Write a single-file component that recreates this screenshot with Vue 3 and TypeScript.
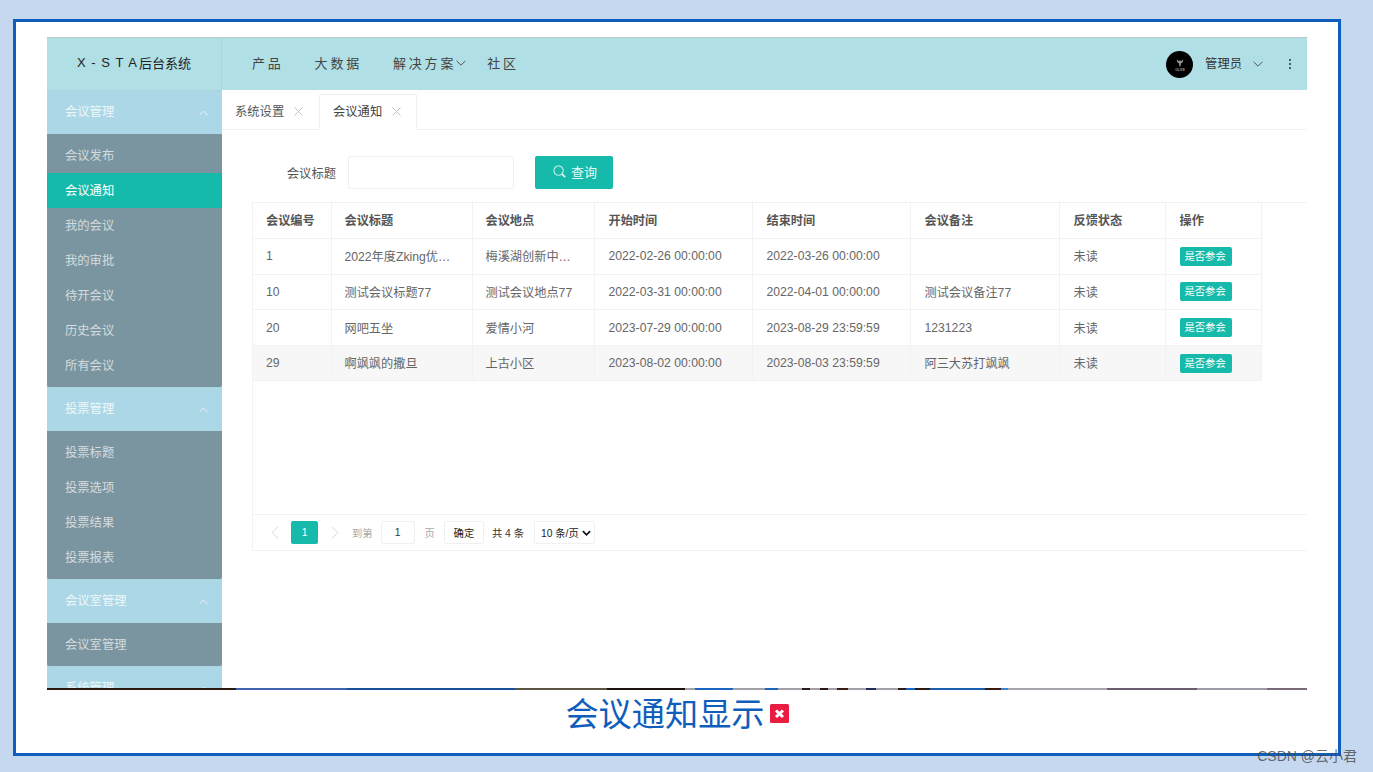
<script setup lang="ts">
interface Group { title: string; items: string[]; open: boolean }
interface Row { id: string; title: string; place: string; start: string; end: string; note: string; state: string }

const groups: Group[] = [
  { title: '会议管理', open: true, items: ['会议发布', '会议通知', '我的会议', '我的审批', '待开会议', '历史会议', '所有会议'] },
  { title: '投票管理', open: true, items: ['投票标题', '投票选项', '投票结果', '投票报表'] },
  { title: '会议室管理', open: true, items: ['会议室管理'] },
  { title: '系统管理', open: false, items: [] }
]
const heads: string[] = ['会议编号', '会议标题', '会议地点', '开始时间', '结束时间', '会议备注', '反馈状态', '操作']
const rows: Row[] = [
  { id: '1', title: '2022年度Zking优…', place: '梅溪湖创新中…', start: '2022-02-26 00:00:00', end: '2022-03-26 00:00:00', note: '', state: '未读' },
  { id: '10', title: '测试会议标题77', place: '测试会议地点77', start: '2022-03-31 00:00:00', end: '2022-04-01 00:00:00', note: '测试会议备注77', state: '未读' },
  { id: '20', title: '网吧五坐', place: '爱情小河', start: '2023-07-29 00:00:00', end: '2023-08-29 23:59:59', note: '1231223', state: '未读' },
  { id: '29', title: '啊飒飒的撒旦', place: '上古小区', start: '2023-08-02 00:00:00', end: '2023-08-03 23:59:59', note: '阿三大苏打飒飒', state: '未读' }
]
const colWidths: number[] = [78, 141, 122, 158, 158, 149, 106, 96]
</script>

<template>
  <div class="page-wrap">
    <div class="frame">
      <div class="app">
        <header class="top">
          <div class="logo"><span class="logo-latin">X-STA</span>后台系统</div>
          <nav class="nav">
            <span class="nav-item">产品</span>
            <span class="nav-item">大数据</span>
            <span class="nav-item nav-caret">解决方案
              <svg class="caret" viewBox="0 0 10 6" width="10" height="6"><path d="M.6.8 5 5.2 9.4.8" fill="none" stroke="#555" stroke-width="1" /></svg>
            </span>
            <span class="nav-item">社区</span>
          </nav>
          <div class="user">
            <span class="avatar">
              <svg viewBox="0 0 26 26" width="26" height="26">
                <path d="M9.5 8.5 12 10 13 9.2 14 10 16.5 8.5 15.6 11.4 14.1 12.2 13.5 15.5H12.5L11.9 12.2 10.4 11.4Z" fill="#8f8f8f" />
                <text x="13" y="19.6" text-anchor="middle" class="avatar-text">OLIVE</text>
              </svg>
            </span>
            <span class="user-name">管理员</span>
            <svg class="user-caret" viewBox="0 0 10 6" width="10" height="6"><path d="M.6.8 5 5.2 9.4.8" fill="none" stroke="#555" stroke-width="1" /></svg>
            <span class="dots"><i></i><i></i><i></i></span>
          </div>
        </header>

        <div class="body">
          <aside class="side">
            <section v-for="g in groups" :key="g.title">
              <div class="group-head">
                <span>{{ g.title }}</span>
                <svg class="group-arrow" viewBox="0 0 10 6" width="9" height="6"><path d="M.6 5.2 5 .8 9.4 5.2" fill="none" stroke="#eef7fa" stroke-width="1" /></svg>
              </div>
              <ul v-if="g.items.length" class="group-list">
                <li v-for="it in g.items" :key="it" :class="{ active: it === '会议通知' }">{{ it }}</li>
              </ul>
            </section>
          </aside>

          <main class="main">
            <div class="tabs">
              <div class="tab">系统设置
                <svg class="x" viewBox="0 0 9 9" width="9" height="9"><path d="M.5.5l8 8M8.5.5l-8 8" stroke="#c4c4c4" stroke-width="1" fill="none" /></svg>
              </div>
              <div class="tab current">会议通知
                <svg class="x" viewBox="0 0 9 9" width="9" height="9"><path d="M.5.5l8 8M8.5.5l-8 8" stroke="#c4c4c4" stroke-width="1" fill="none" /></svg>
              </div>
            </div>

            <div class="content">
              <form class="search" @submit.prevent>
                <label class="search-label">会议标题</label>
                <input class="search-input" type="text" />
                <button class="search-btn" type="button">
                  <svg viewBox="0 0 16 16" width="15" height="15"><circle cx="7" cy="7" r="5" fill="none" stroke="#bdeee8" stroke-width="1.2" /><path d="M10.8 10.8 14 14" stroke="#e6f8f6" stroke-width="1.8" /></svg>
                  <span>查询</span>
                </button>
              </form>

              <div class="table-box">
                <div class="table-area">
                  <table class="table">
                    <colgroup><col v-for="(w, i) in colWidths" :key="i" :style="{ width: w + 'px' }" /></colgroup>
                    <thead>
                      <tr><th v-for="h in heads" :key="h">{{ h }}</th></tr>
                    </thead>
                    <tbody>
                      <tr v-for="(r, i) in rows" :key="r.id" :class="{ hover: i === 3 }">
                        <td>{{ r.id }}</td>
                        <td>{{ r.title }}</td>
                        <td>{{ r.place }}</td>
                        <td>{{ r.start }}</td>
                        <td>{{ r.end }}</td>
                        <td>{{ r.note }}</td>
                        <td>{{ r.state }}</td>
                        <td><span class="tag">是否参会</span></td>
                      </tr>
                    </tbody>
                  </table>
                </div>
                <div class="pager">
                  <svg class="pg-arrow" viewBox="0 0 8 14" width="8" height="13"><path d="M7 1 1 7l6 6" fill="none" stroke="#d2d2d2" stroke-width="1" /></svg>
                  <span class="pg-cur">1</span>
                  <svg class="pg-arrow next" viewBox="0 0 8 14" width="8" height="13"><path d="m1 1 6 6-6 6" fill="none" stroke="#d2d2d2" stroke-width="1" /></svg>
                  <span class="pg-light to">到第</span>
                  <span class="pg-input">1</span>
                  <span class="pg-light page">页</span>
                  <span class="pg-ok">确定</span>
                  <span class="pg-total">共 4 条</span>
                  <span class="pg-size">10 条/页
                    <svg viewBox="0 0 10 6" width="9" height="6"><path d="M1 1l4 4 4-4" fill="none" stroke="#111" stroke-width="1.9" /></svg>
                  </span>
                </div>
              </div>
            </div>
          </main>
        </div>
        <div class="strip"></div>
      </div>

      <div class="caption">
        <span>会议通知显示</span>
        <svg class="err" viewBox="0 0 19 19" width="19" height="19">
          <rect width="19" height="19" rx="1.5" fill="#ea1c41" />
          <path d="M6 6.5l7 6.5M13 6.5l-7 6.5" stroke="#fff" stroke-width="3" />
        </svg>
      </div>
    </div>
    <div class="mark">CSDN @云小君</div>
  </div>
</template>

<style>
html, body { margin: 0; background: #c6d8f0; }
</style>

<style scoped>
* { box-sizing: border-box; }
.page-wrap {
  position: relative;
  height: 772px;
  padding: 19px 0 0 13px;
  overflow: hidden;
  font-family: "Liberation Sans", "Noto Sans CJK SC", sans-serif;
  font-size: 12.3px;
  color: #666;
}
.frame {
  width: 1328px;
  height: 737px;
  padding: 15px 31px 0;
  border: 3px solid #0f5ebb;
  background: #fff;
}
.app { width: 1260px; height: 653px; display: flex; flex-direction: column; overflow: hidden; }
.top { height: 53px; flex: none; display: flex; align-items: center; background: #b0dfe5; border-top: 1px solid #bcc8c8; color: #333; }
.logo { width: 175px; height: 100%; padding-bottom: 3px; display: flex; align-items: center; justify-content: center; font-size: 13px; color: #222; background: #b0dfe5; border-right: 1px solid #a8d6db; box-shadow: 0 1px 0 #a3d0d8; }
.logo-latin { letter-spacing: 5.6px; margin-right: -3.5px; }
.nav { display: flex; align-items: center; padding: 0 0 3px 30px; gap: 31px; }
.nav-item { font-size: 13px; letter-spacing: 2.8px; color: #444; white-space: nowrap; display: flex; align-items: center; }
.nav-caret { margin-right: -10px; }
.user { margin-left: auto; display: flex; align-items: center; padding-right: 16px; }
.avatar { width: 27px; height: 27px; border-radius: 50%; background: #000; display: flex; align-items: center; justify-content: center; }
.avatar-text { font-size: 3.2px; fill: #a0a0a0; font-family: "Liberation Sans", sans-serif; font-weight: 700; }
.user-name { margin: 0 0 3px 12px; color: #333; font-size: 12.3px; }
.user-caret { margin-left: 11px; }
.dots { margin-left: 26px; display: flex; flex-direction: column; gap: 2px; }
.dots i { display: block; width: 2px; height: 2px; background: #333; border-radius: 50%; }
.body { flex: 1; min-height: 0; display: flex; }
.side { width: 175px; flex: none; overflow: hidden; background: #acd7e6; color: #fff; }
.group-head { height: 44px; padding: 0 14px 4px 18px; display: flex; align-items: center; justify-content: space-between; color: #eef7fa; border-top: 1px solid #a9d5df; }
.group-arrow { margin-top: 4px; }
.group-list { margin: 0; padding: 4px 0; list-style: none; background: #7a959f; border-radius: 0 0 2px 2px; }
.group-list li { height: 35px; line-height: 37px; padding-left: 18px; color: #d4dcdf; }
.group-list li.active { background: #16baaa; color: #fff; }
.main { flex: 1; min-width: 0; display: flex; flex-direction: column; }
.tabs { height: 40px; flex: none; display: flex; align-items: flex-end; border-bottom: 1px solid #f0f0f0; background: #fff; padding-top: 4px; }
.tab { height: 36px; width: 98px; padding: 0 0 2px 13px; display: flex; align-items: center; color: #555; margin-bottom: -1px; }
.tab .x { margin-left: 10px; }
.tab.current { border: 1px solid #f0f0f0; border-bottom-color: #fff; color: #444; border-radius: 2px 2px 0 0; margin-left: -1px; }
.content { padding: 26px 0 0 30px; }
.search { display: flex; align-items: center; height: 33px; }
.search-label { width: 84px; text-align: right; color: #555; }
.search-input { width: 166px; height: 33px; margin-left: 12px; border: 1px solid #f0f0f0; border-radius: 2px; background: #fff; outline: none; }
.search-btn { width: 78px; height: 33px; margin-left: 21px; padding: 0 0 3px 1px; border: 0; border-radius: 2px; background: #16baaa; color: #e6f8f6; font: inherit; font-size: 13px; display: flex; align-items: center; justify-content: center; gap: 4px; }
.table-box { margin-top: 13px; width: 1055px; border: 1px solid #f2f2f2; border-right: 0; }
.table-area { height: 312px; border-bottom: 1px solid #f2f2f2; overflow: hidden; }
.table { table-layout: fixed; width: 1008px; border-collapse: collapse; font-size: 12.2px; }
.table th, .table td { height: 35.6px; padding: 0 13px; text-align: left; border: 1px solid #f2f2f2; white-space: nowrap; overflow: hidden; font-weight: 400; color: #666; }
.table th:nth-child(n + 4), .table td:nth-child(n + 4) { padding-left: 14px; padding-right: 12px; }
.table tr > :first-child { border-left: 0; }
.table thead tr > * { border-top: 0; }
.table th { font-weight: 700; color: #555; padding-bottom: 2px; }
.table tr.hover td { background: #f7f7f7; }
.tag { display: inline-block; height: 19px; line-height: 19px; padding: 0 5px; width: 52px; border-radius: 2px; background: #16baaa; color: #fff; font-size: 10.3px; vertical-align: middle; }
.pager { height: 35px; display: flex; align-items: center; padding-left: 18px; font-size: 10.3px; color: #333; }
.pg-arrow { flex: none; }
.pg-cur { width: 27px; height: 23px; margin-left: 12px; background: #16baaa; color: #fff; border-radius: 2px; display: flex; align-items: center; justify-content: center; }
.next { margin-left: 13px; }
.pg-light { color: #aaa; }
.to { margin-left: 13px; }
.pg-input { width: 34px; height: 23px; margin-left: 8px; border: 1px solid #f0f0f0; border-radius: 2px; display: flex; align-items: center; justify-content: center; }
.page { margin-left: 10px; }
.pg-ok { width: 40px; height: 23px; margin-left: 9px; border: 1px solid #f0f0f0; border-radius: 2px; display: flex; align-items: center; justify-content: center; color: #222; }
.pg-total { margin-left: 8px; }
.pg-size { width: 61px; height: 23px; margin-left: 10px; padding-left: 6px; border: 1px solid #f0f0f0; border-radius: 2px; display: flex; align-items: center; gap: 3px; color: #222; white-space: nowrap; }
.strip {
  height: 2px;
  flex: none;
  background: linear-gradient(90deg,
    #2a1a10 0 189px, #3f63ad 189px 300px, #1a4f9a 300px 468px,
    #5c5542 468px 560px, #1d1410 560px 638px, #a4a0aa 638px 648px,
    #1a66c0 648px 686px, #a4a0aa 686px 718px, #1a66c0 718px 731px,
    #a4a0aa 731px 755px, #2b1a18 755px 763px, #a4a0aa 763px 773px,
    #2b1a18 773px 781px, #a4a0aa 781px 790px, #3a1e16 790px 801px,
    #a4a0aa 801px 819px, #232c58 819px 829px, #a4a0aa 829px 851px,
    #2b1a18 851px 859px, #1a66c0 859px 868px, #2b1a18 868px 883px,
    #1a5fae 883px 938px, #3a1a12 938px 954px, #3a86d0 954px 961px,
    #a8a4ac 961px 1060px, #6c5c70 1060px 1150px, #a09aa8 1150px 1220px, #7a6a78 1220px 1260px);
}
.caption { height: 50px; display: flex; align-items: center; justify-content: center; gap: 5px; font-size: 33.2px; color: #0f5ebb; line-height: 1; }
.err { margin-top: -4px; flex: none; }
.mark { position: absolute; z-index: 5; right: 16px; bottom: 6px; font-size: 14px; line-height: 20px; color: rgba(70, 70, 70, .8); white-space: nowrap; }
</style>
